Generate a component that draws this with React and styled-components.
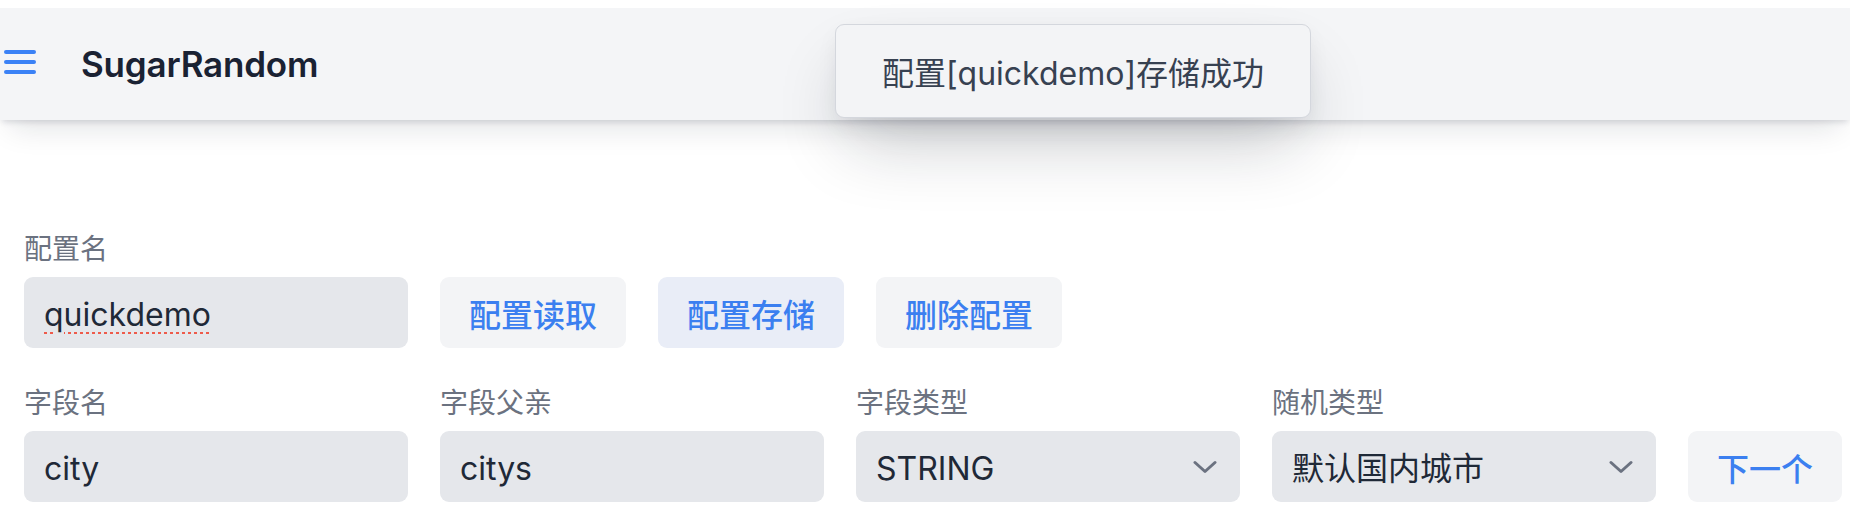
import React from "react";
import styled, { createGlobalStyle } from "styled-components";

const Global = createGlobalStyle`
  html, body { margin: 0; padding: 0; background: #ffffff; }
  body {
    font-family: Inter, "Noto Sans CJK SC", sans-serif;
    color: #1f2937;
    overflow: hidden;
  }
  * { box-sizing: border-box; }
`;

const Page = styled.div`
  position: relative;
  width: 1850px;
  min-height: 514px;
  padding-top: 8px;
`;

const Header = styled.header`
  height: 112px;
  background: #f4f5f7;
  display: flex;
  align-items: center;
  padding-left: 4px;
  gap: 45px;
  box-shadow: 0 4px 6px -2px rgba(17, 24, 39, 0.14), 0 18px 28px -10px rgba(17, 24, 39, 0.12);
  position: relative;
  z-index: 1;
`;

const MenuButton = styled.button`
  border: none;
  background: transparent;
  padding: 0;
  width: 32px;
  height: 24px;
  display: flex;
  flex-direction: column;
  justify-content: space-between;
  cursor: pointer;
  margin-top: -4px;
`;

const MenuLine = styled.span`
  display: block;
  width: 32px;
  height: 4px;
  border-radius: 2px;
  background: #3b82f6;
`;

const Title = styled.h1`
  margin: 0;
  font-family: Inter, sans-serif;
  font-size: 35px;
  font-weight: 600;
  color: #1a2233;
  letter-spacing: -0.2px;
`;

const Toast = styled.div`
  position: absolute;
  left: 835px;
  top: 24px;
  width: 476px;
  height: 94px;
  z-index: 5;
  display: flex;
  align-items: center;
  justify-content: center;
  background: #f3f4f6;
  border: 1.5px solid #d4d7dd;
  border-radius: 9px;
  font-size: 32px;
  color: #374151;
  box-shadow: 0 36px 70px -14px rgba(17, 24, 39, 0.24), 0 8px 24px -6px rgba(17, 24, 39, 0.1);
`;

const Content = styled.main`
  padding: 107px 0 0 24px;
  display: flex;
  flex-direction: column;
  gap: 33px;
`;

const Row = styled.div`
  display: grid;
  grid-template-columns: ${(p) => p.$cols};
  column-gap: 32px;
  align-items: end;
`;

const ButtonGroup = styled.div`
  display: flex;
  gap: 32px;
`;

const Field = styled.div`
  display: flex;
  flex-direction: column;
  gap: 10px;
`;

const Label = styled.label`
  font-size: 28px;
  line-height: 40px;
  color: #6b7280;
  font-family: "Noto Sans CJK SC", Inter, sans-serif;
`;

const TextInput = styled.input`
  width: 100%;
  height: 71px;
  border: none;
  outline: none;
  border-radius: 9px;
  background: #e5e7eb;
  padding: 4px 20px 0;
  font-family: Inter, "Noto Sans CJK SC", sans-serif;
  font-size: 32px;
  color: #1f2937;
  text-decoration: ${(p) => (p.$misspelled ? "underline dotted #ee5b4b" : "none")};
  text-decoration-thickness: 3px;
  text-underline-offset: 6px;
`;

const SelectWrap = styled.div`
  position: relative;
  width: 100%;
`;

const Select = styled.select`
  width: 100%;
  height: 71px;
  border: none;
  outline: none;
  appearance: none;
  -webkit-appearance: none;
  border-radius: 9px;
  background: #e5e7eb;
  padding: 4px 64px 0 20px;
  font-family: Inter, "Noto Sans CJK SC", sans-serif;
  font-size: 32px;
  color: #1f2937;
`;

const Chevron = styled.svg`
  position: absolute;
  right: 23px;
  top: 50%;
  transform: translateY(-50%);
  width: 24px;
  height: 24px;
  pointer-events: none;
`;

const ActionButton = styled.button`
  height: 71px;
  padding: 0 29px;
  border: none;
  border-radius: 9px;
  background: ${(p) => (p.$active ? "#e9edf7" : "#f3f4f6")};
  color: #3b7ff0;
  font-family: "Noto Sans CJK SC", Inter, sans-serif;
  font-size: 32px;
  font-weight: 500;
  cursor: pointer;
  white-space: nowrap;
`;

const ChevronIcon = () => (
  <Chevron viewBox="0 0 24 24" fill="none" stroke="#6b7280" strokeWidth="3" strokeLinecap="round" strokeLinejoin="round">
    <path d="M2 7.5l10 9 10-9" />
  </Chevron>
);

export default function App() {
  return (
    <>
      <Global />
      <Page>
        <Header>
          <MenuButton aria-label="menu">
            <MenuLine />
            <MenuLine />
            <MenuLine />
          </MenuButton>
          <Title>SugarRandom</Title>
        </Header>

        <Toast>配置[quickdemo]存储成功</Toast>

        <Content>
          <Row $cols="384px auto">
            <Field>
              <Label>配置名</Label>
              <TextInput defaultValue="quickdemo" $misspelled spellCheck={false} />
            </Field>
            <ButtonGroup>
              <ActionButton>配置读取</ActionButton>
              <ActionButton $active>配置存储</ActionButton>
              <ActionButton>删除配置</ActionButton>
            </ButtonGroup>
          </Row>

          <Row $cols="384px 384px 384px 384px auto">
            <Field>
              <Label>字段名</Label>
              <TextInput defaultValue="city" />
            </Field>
            <Field>
              <Label>字段父亲</Label>
              <TextInput defaultValue="citys" />
            </Field>
            <Field>
              <Label>字段类型</Label>
              <SelectWrap>
                <Select defaultValue="STRING">
                  <option value="STRING">STRING</option>
                  <option value="INT">INT</option>
                </Select>
                <ChevronIcon />
              </SelectWrap>
            </Field>
            <Field>
              <Label>随机类型</Label>
              <SelectWrap>
                <Select defaultValue="city">
                  <option value="city">默认国内城市</option>
                </Select>
                <ChevronIcon />
              </SelectWrap>
            </Field>
            <div>
              <ActionButton>下一个</ActionButton>
            </div>
          </Row>
        </Content>
      </Page>
    </>
  );
}
